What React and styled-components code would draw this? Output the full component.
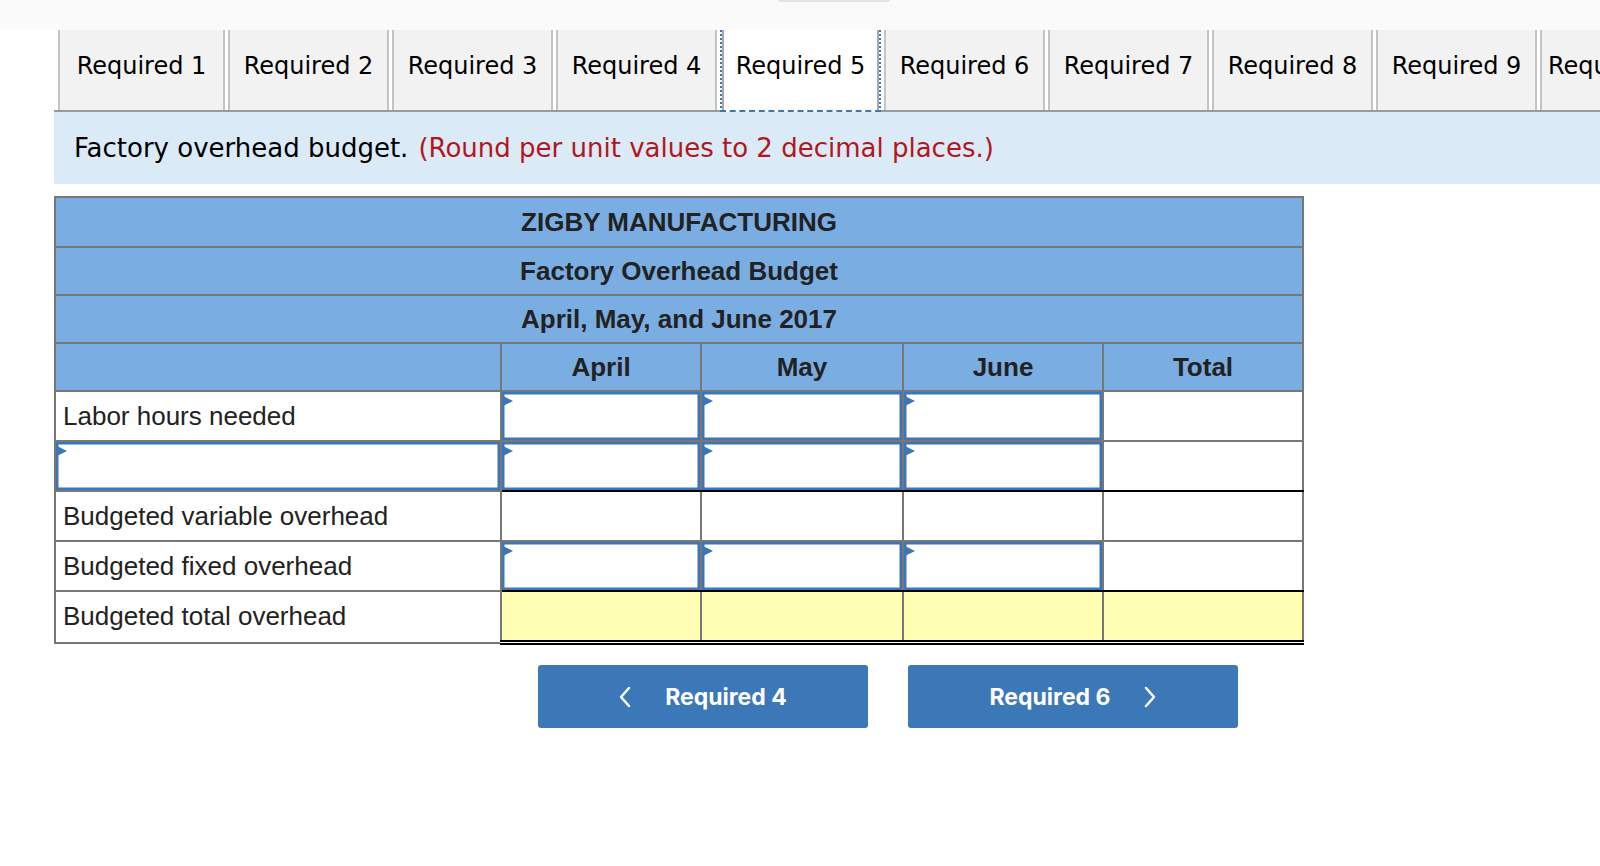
import React from "react";
import styled, { createGlobalStyle } from "styled-components";

// ------------------------------styles---------------------------------------
const GlobalStyle = createGlobalStyle`
  html {
    overflow: hidden;
  }
  body {
    margin: 0;
    background: #fff;
    font-family: "DejaVu Sans", Verdana, sans-serif;
    color: #000;
  }
`;

const TopBar = styled.div`
  height: 30px;
  display: flex;
  background: #fafafa;
`;

const Handle = styled.div`
  margin-left: 778px;
  width: 112px;
  height: 2px;
  border-radius: 0 0 8px 8px;
  background: #e3e3e3;
`;

const Page = styled.div`
  padding-left: 54px;
`;

const TabBar = styled.div`
  display: flex;
  height: 80px;
  padding-left: 4px;
  border-bottom: 2px solid #9a9a9a;
`;

const Tab = styled.div`
  flex: 0 0 auto;
  box-sizing: border-box;
  width: ${(p) => (p.$first ? 167 : 161)}px;
  height: ${(p) => (p.$active ? 82 : 80)}px;
  margin-right: 3px;
  margin-bottom: ${(p) => (p.$active ? -2 : 0)}px;
  padding-top: 22px;
  display: flex;
  justify-content: center;
  font-size: 24px;
  white-space: nowrap;
  background: ${(p) => (p.$active ? "#fff" : "#f2f2f2")};
  border-left: 2px ${(p) => (p.$active ? "dotted #3c78b8" : "solid #c4c4c4")};
  border-right: 2px ${(p) => (p.$active ? "dotted #3c78b8" : "solid #c4c4c4")};
  border-bottom: ${(p) => (p.$active ? "2px dashed #3c78b8" : "none")};
  box-shadow: ${(p) =>
    p.$active ? "inset 2px 0 0 #a8a8a8, inset -2px 0 0 #a8a8a8" : "none"};
`;

const Instruction = styled.div`
  height: 72px;
  display: flex;
  align-items: center;
  padding-left: 20px;
  font-size: 26px;
  white-space: nowrap;
  background: #dbeaf7;
`;

const Hint = styled.span`
  color: #b3161d;
  margin-left: 10px;
`;

const Table = styled.table`
  margin-top: 12px;
  width: 1248px;
  table-layout: fixed;
  border-collapse: collapse;
  font-family: "Liberation Sans", Arial, sans-serif;
  font-size: 26px;
  color: #222;
`;

const HeadCell = styled.th`
  height: ${(p) => p.$h}px;
  padding: 0;
  text-align: center;
  vertical-align: middle;
  font-weight: 700;
  background: #7aade2;
  border: 2px solid #777;
`;

const Cell = styled.td`
  position: relative;
  height: 48px;
  padding: 0 7px;
  vertical-align: middle;
  white-space: nowrap;
  background: ${(p) => (p.$yellow ? "#ffffb3" : "#fff")};
  border: 2px solid #777;
  border-bottom: ${(p) =>
    p.$yellow
      ? "5px double #000"
      : p.$strong
      ? "2px solid #000"
      : "2px solid #777"};
  box-shadow: ${(p) => (p.$input ? "inset 0 0 0 2.5px #3c76b9" : "none")};

  &::before {
    content: "";
    display: ${(p) => (p.$input ? "block" : "none")};
    position: absolute;
    left: 1px;
    top: 4px;
    width: 0;
    height: 0;
    border-top: 5px solid transparent;
    border-bottom: 5px solid transparent;
    border-left: 10px solid #3c76b9;
  }
`;

const ButtonRow = styled.div`
  display: flex;
  gap: 40px;
  margin-top: 20px;
  padding-left: 484px;
`;

const NavButton = styled.button`
  width: 330px;
  height: 63px;
  display: flex;
  align-items: center;
  justify-content: center;
  gap: 34px;
  border: none;
  border-radius: 3px;
  background: #3c78b8;
  color: #fff;
  font-family: Inter, "Liberation Sans", sans-serif;
  font-weight: 700;
  font-size: 23px;
  cursor: pointer;
`;
// ------------------------------styles---------------------------------------

const Chevron = ({ dir }) => (
  <svg width="12" height="22" viewBox="0 0 12 22">
    <polyline
      points={dir === "left" ? "10,2 2,11 10,20" : "2,2 10,11 2,20"}
      fill="none"
      stroke="#fff"
      strokeWidth="2.5"
      strokeLinecap="round"
      strokeLinejoin="round"
    />
  </svg>
);

const tabs = Array.from({ length: 10 }, (_, i) => `Required ${i + 1}`);
const months = ["April", "May", "June"];

// ------------------------main component--------------------------------------
const App = () => {
  return (
    <>
      <GlobalStyle />
      <TopBar>
        <Handle />
      </TopBar>
      <Page>
        <TabBar>
          {tabs.map((t, i) => (
            <Tab key={t} $first={i === 0} $active={i === 4}>
              {t}
            </Tab>
          ))}
        </TabBar>

        <Instruction>
          Factory overhead budget.
          <Hint>(Round per unit values to 2 decimal places.)</Hint>
        </Instruction>

        <Table>
          <colgroup>
            <col style={{ width: 446 }} />
            <col style={{ width: 200 }} />
            <col style={{ width: 202 }} />
            <col style={{ width: 200 }} />
            <col style={{ width: 200 }} />
          </colgroup>
          <thead>
            <tr>
              <HeadCell colSpan={5} $h={48}>
                ZIGBY MANUFACTURING
              </HeadCell>
            </tr>
            <tr>
              <HeadCell colSpan={5} $h={46}>
                Factory Overhead Budget
              </HeadCell>
            </tr>
            <tr>
              <HeadCell colSpan={5} $h={46}>
                April, May, and June 2017
              </HeadCell>
            </tr>
            <tr>
              <HeadCell $h={46} />
              {months.map((m) => (
                <HeadCell key={m} $h={46}>
                  {m}
                </HeadCell>
              ))}
              <HeadCell $h={46}>Total</HeadCell>
            </tr>
          </thead>
          <tbody>
            <tr>
              <Cell>Labor hours needed</Cell>
              {months.map((m) => (
                <Cell key={m} $input />
              ))}
              <Cell />
            </tr>
            <tr>
              <Cell $input />
              {months.map((m) => (
                <Cell key={m} $input $strong />
              ))}
              <Cell $strong />
            </tr>
            <tr>
              <Cell>Budgeted variable overhead</Cell>
              {months.map((m) => (
                <Cell key={m} />
              ))}
              <Cell />
            </tr>
            <tr>
              <Cell>Budgeted fixed overhead</Cell>
              {months.map((m) => (
                <Cell key={m} $input $strong />
              ))}
              <Cell $strong />
            </tr>
            <tr>
              <Cell>Budgeted total overhead</Cell>
              {months.map((m) => (
                <Cell key={m} $yellow />
              ))}
              <Cell $yellow />
            </tr>
          </tbody>
        </Table>

        <ButtonRow>
          <NavButton>
            <Chevron dir="left" />
            Required 4
          </NavButton>
          <NavButton>
            Required 6
            <Chevron dir="right" />
          </NavButton>
        </ButtonRow>
      </Page>
    </>
  );
};

export default App;
